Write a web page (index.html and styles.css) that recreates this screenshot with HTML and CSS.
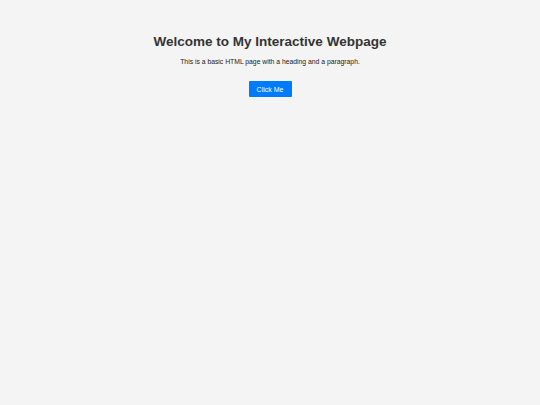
FILE: index.html
```html
<!DOCTYPE html>
<html>
<head>
<meta charset="utf-8">
<link rel="stylesheet" href="styles.css">
</head>
<body>
<main class="page">
<h1 class="title">Welcome to My Interactive Webpage</h1>
<p class="text">This is a basic HTML page with a heading and a paragraph.</p>
<button class="btn">Click Me</button>
</main>
</body>
</html>
```
FILE: styles.css
```css
html, body {
  margin: 0;
  padding: 0;
  background: #f4f4f4;
  height: 100%;
}
body {
  font-family: "Liberation Sans", Arial, sans-serif;
  color: #333;
}
.page {
  display: flex;
  flex-direction: column;
  align-items: center;
  padding-top: 33px;
}
.title {
  margin: 0;
  font-size: 13.5px;
  font-weight: bold;
  line-height: 17px;
}
.text {
  margin: 7px 0 0;
  font-size: 6.8px;
  line-height: 9px;
  color: #222;
}
.btn {
  margin-top: 15px;
  width: 43px;
  height: 16px;
  padding: 0;
  border: none;
  border-radius: 1px;
  background: #007bff;
  color: #fff;
  font-family: "Liberation Sans", Arial, sans-serif;
  font-size: 7px;
}
```
